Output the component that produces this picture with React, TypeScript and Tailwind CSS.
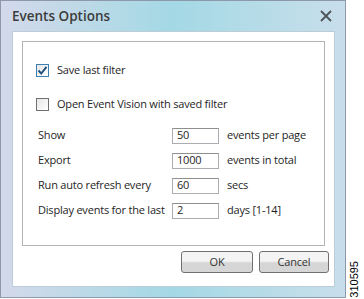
import React from "react";

const rows = [
  { label: "Show", value: "50", suffix: "events per page" },
  { label: "Export", value: "1000", suffix: "events in total" },
  { label: "Run auto refresh every", value: "60", suffix: "secs" },
  { label: "Display events for the last", value: "2", suffix: "days [1-14]" },
];

function CheckBox({ checked }: { checked: boolean }) {
  return (
    <span
      className={`flex h-[13px] w-[13px] items-center justify-center border bg-gradient-to-br from-[#e6e6e6] to-white ${
        checked ? "border-[#3c7fb1]" : "border-[#707070]"
      }`}
    >
      {checked && (
        <svg width="11" height="11" viewBox="0 0 11 11">
          <path d="M1.5 5.5 L4.2 8.5 L9.5 1.8" fill="none" stroke="#21507f" strokeWidth="1.9" />
        </svg>
      )}
    </span>
  );
}

export default function App() {
  return (
    <div className="flex h-[299px] w-[364px] bg-white font-['Open_Sans',sans-serif] text-[11px] tracking-[-0.2px] text-[#1e1e1e]">
      {/* Fenêtre */}
      <div className="flex h-[298px] w-[346px] flex-col border border-[#8d99aa] bg-linear-to-r from-[#d3d9ea] via-[#a3d9e5] to-[#c8deeb]">
        <div className="flex h-[30px] items-center justify-between pl-[11px] pr-[13px]">
          <span className="text-[13.5px] font-semibold tracking-normal text-[#3c3c3c]">Events Options</span>
          <svg width="12" height="12" viewBox="0 0 12 12">
            <path d="M1 1 L11 11 M11 1 L1 11" stroke="#4f5356" strokeWidth="1.8" />
          </svg>
        </div>

        <div className="ml-[11px] mr-[10px] flex h-[256px] flex-col border border-[#bccdd8] bg-white">
          <div className="mx-[9px] mt-[9px] h-[205px] border border-[#b4b4b4]">
            <div className="flex flex-col">
              <div className="mt-[18px] flex h-[20px] items-center gap-[8px] pl-[13px]">
                <CheckBox checked />
                <span>Save last filter</span>
              </div>
              <div className="mt-[14px] flex h-[20px] items-center gap-[8px] pl-[13px]">
                <CheckBox checked={false} />
                <span>Open Event Vision with saved filter</span>
              </div>
              <div className="mt-[9px] flex flex-col">
                {rows.map((r) => (
                  <div key={r.label} className="flex h-[25px] items-center pl-[15px]">
                    <span className="w-[134px] whitespace-nowrap">{r.label}</span>
                    <span className="flex h-[16px] w-[47px] items-center border border-[#abadb3] border-t-[#8e8f8f] bg-white pl-[4px]">
                      {r.value}
                    </span>
                    <span className="ml-[8px]">{r.suffix}</span>
                  </div>
                ))}
              </div>
            </div>
          </div>

          <div className="mt-[5px] flex justify-end gap-[6px] pr-[5px]">
            <button className="flex h-[22px] w-[72px] items-center justify-center rounded-[3px] border border-[#707070] bg-linear-to-b from-[#f4f4f4] from-45% to-[#d6d6d6] to-55% text-[#333]">
              OK
            </button>
            <button className="flex h-[22px] w-[70px] items-center justify-center rounded-[3px] border border-[#707070] bg-linear-to-b from-[#f4f4f4] from-45% to-[#d6d6d6] to-55% text-[#333]">
              Cancel
            </button>
          </div>
        </div>
      </div>

      <div className="flex flex-1 flex-col justify-end pb-[1px] pl-[3px]">
        <span className="rotate-180 font-['Liberation_Sans',sans-serif] text-[11px] leading-none tracking-normal text-black [writing-mode:vertical-rl]">
          310595
        </span>
      </div>
    </div>
  );
}
